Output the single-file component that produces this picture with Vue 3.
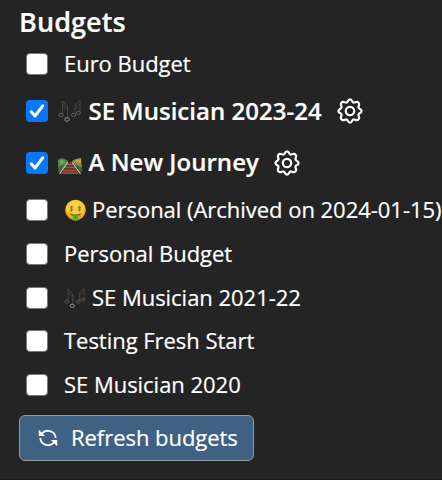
<script setup>
const budgets = [
  { name: 'Euro Budget' },
  { name: 'SE Musician 2023-24', icon: 'notes', active: true },
  { name: 'A New Journey', icon: 'track', active: true },
  { name: 'Personal (Archived on 2024-01-15)', icon: 'money' },
  { name: 'Personal Budget' },
  { name: 'SE Musician 2021-22', icon: 'notes' },
  { name: 'Testing Fresh Start' },
  { name: 'SE Musician 2020' },
]
</script>

<template>
  <main class="panel">
    <h2 class="title">Budgets</h2>
    <ul class="list">
      <li v-for="b in budgets" :key="b.name" class="row" :class="{ active: b.active }">
        <span class="box" role="checkbox" :aria-checked="!!b.active">
          <svg v-if="b.active" viewBox="0 0 22 22"><path d="M5.300 11.800 9 16 16.700 5.800" fill="none" stroke="#fff" stroke-width="3" stroke-linecap="round" stroke-linejoin="round" /></svg>
        </span>
        <svg v-if="b.icon === 'notes'" class="emoji" viewBox="0 0 24 24">
          <g fill="none" stroke="#5c5c5c" stroke-width="1">
            <path d="M4.500 15V2l5 6v7M4.500 6l5 5M9.500 20V8M17 15V6l5-4.500v12M17 9l5-4" stroke="#484848" />
            <ellipse cx="3" cy="16" rx="2.300" ry="1.600" />
            <ellipse cx="9" cy="20.500" rx="2.300" ry="1.800" stroke="#959595" />
            <ellipse cx="15.500" cy="16" rx="2.200" ry="1.600" />
            <ellipse cx="20.500" cy="13.800" rx="2" ry="1.500" />
          </g>
        </svg>
        <svg v-else-if="b.icon === 'track'" class="emoji track" viewBox="0 0 24 24">
          <path d="M0 8l3-2 4 1 3 2-4 8-6 2z" fill="#4b8a3a" />
          <path d="M14 9l4-2 5-1 1 12-4-2z" fill="#918f3a" />
          <path d="M1 9l4-1 2 2-4 4z" fill="#69a653" />
          <path d="M17 8l6-1v4l-4-1z" fill="#bea545" />
          <path d="M0 15l6-3-3 8H0zM18 12l6 4v4h-3z" fill="#3d6630" />
          <path d="M9.500 10h5L22 22H2z" fill="#51332a" />
          <path d="M9 12.500h6M7 15.500h10M5.500 18.500h13M4 21h16" stroke="#9b5b42" stroke-width="1.400" />
          <path d="M10 10 1.500 22M14 10l8.500 12" stroke="#c6bdb5" stroke-width="1.200" />
        </svg>
        <svg v-else-if="b.icon === 'money'" class="emoji" viewBox="0 0 22 22">
          <defs>
            <radialGradient id="face" cx=".5" cy=".35" r=".65">
              <stop offset="0" stop-color="#ffe04b" /><stop offset=".65" stop-color="#fbc52f" /><stop offset="1" stop-color="#e98a1d" />
            </radialGradient>
          </defs>
          <circle cx="11.500" cy="11" r="10.300" fill="url(#face)" />
          <ellipse cx="7.500" cy="9.500" rx="2.800" ry="3.300" fill="#f0c344" />
          <ellipse cx="15.500" cy="9.500" rx="2.800" ry="3.300" fill="#f0c344" />
          <path d="M9 8c-2.500-1-3.500 1-1.500 1.600s1.200 2.600-1.600 1.500M7.500 6.600v6M17 8c-2.500-1-3.500 1-1.500 1.600s1.200 2.600-1.600 1.500M15.500 6.600v6" fill="none" stroke="#8a6a20" stroke-width=".8" />
          <path d="M5.500 14q6 2.600 12 0-1.500 3.800-6 3.800t-6-3.800z" fill="#a3661c" />
          <path d="M8.500 15.500h6v4q0 2.200-3 2.200t-3-2.200z" fill="#55b531" />
          <path d="M11.500 16v3" stroke="#267d20" />
        </svg>
        <span class="name">{{ b.name }}</span>
        <svg v-if="b.active" class="gear" viewBox="0 0 26 26">
          <g fill="none" stroke="#fff" stroke-width="2.200" stroke-linejoin="round">
            <path d="M13 1.400Q14.400 1.400 15.300 3.400Q16.100 5 18 4.300Q20.500 3.300 21.400 4.600Q22.700 5.500 21.700 8Q21 9.900 22.600 10.700Q24.600 11.600 24.600 13Q24.600 14.400 22.600 15.300Q21 16.100 21.700 18Q22.700 20.500 21.400 21.400Q20.500 22.700 18 21.700Q16.100 21 15.300 22.600Q14.400 24.600 13 24.600Q11.600 24.600 10.700 22.600Q9.900 21 8 21.700Q5.500 22.700 4.600 21.400Q3.300 20.500 4.300 18Q5 16.100 3.400 15.300Q1.400 14.400 1.400 13Q1.400 11.600 3.400 10.700Q5 9.900 4.300 8Q3.300 5.500 4.600 4.600Q5.500 3.300 8 4.300Q9.900 5 10.700 3.400Q11.600 1.400 13 1.400Z" />
            <circle cx="13" cy="13" r="4.200" />
          </g>
        </svg>
      </li>
    </ul>
    <button class="refresh">
      <svg viewBox="0 0 20 20">
        <g fill="none" stroke="#fff" stroke-width="1.900">
          <path d="M3.500 6.500A7.700 7.700 0 0 1 17.700 10" />
          <path d="M16.500 13.500A7.700 7.700 0 0 1 2.300 10" />
        </g>
        <path d="M.8 1.800V8H7zM19.200 18.200V12H13z" fill="#fff" />
      </svg>
      <span>Refresh budgets</span>
    </button>
  </main>
</template>

<style>
body { margin: 0; background: #242424; overflow: hidden; }
</style>

<style scoped>
.panel {
  box-sizing: border-box;
  width: 442px;
  height: 480px;
  padding: 2px 0 0 19px;
  background: #242424;
  color: #fff;
  font-family: "Open Sans", "Noto Sans", sans-serif;
  -webkit-text-stroke: 0.2px #fff;
  overflow: hidden;
  border-bottom: 1px solid #1d181c;
}
.title { margin: 0 0 1px; height: 39px; font-size: 27px; line-height: 39px; font-weight: 600; letter-spacing: .1px; }
.list { margin: 0; padding: 0; list-style: none; }
.row { display: flex; align-items: center; height: 43.7px; padding-left: 7px; font-size: 22px; white-space: nowrap; }
.row.active { height: 51.3px; font-size: 24px; font-weight: 600; }
.name { margin-top: -1.600px; letter-spacing: -.03px; }
.active .name { letter-spacing: .03px; }
.box { box-sizing: border-box; flex: none; width: 22px; height: 22px; margin-right: 16px; border: 1px solid #77777a; border-radius: 4px; background: #fff; }
.active .box { margin-right: 10px; border: 0; background: #0878fa; }
.box svg { display: block; width: 22px; height: 22px; }
.emoji { flex: none; width: 22px; height: 22px; margin-right: 6px; }
.active .emoji { width: 24px; height: 24px; margin-right: 6.600px; }
.active .track { margin-top: 3px; }
.gear { flex: none; width: 26px; height: 26px; margin-left: 15.200px; }
.refresh {
  box-sizing: border-box;
  display: flex;
  align-items: center;
  gap: 13px;
  width: 235px;
  height: 46px;
  margin-top: 8.300px;
  padding: 0 0 0 18px;
  border: 1px solid #999;
  border-radius: 6px;
  background: #3f6184;
  color: #fff;
  font: 22px "Open Sans", "Noto Sans", sans-serif;
  -webkit-text-stroke: 0.2px #fff;
  white-space: nowrap;
}
.refresh svg { flex: none; width: 20px; height: 20px; }
.refresh span { margin-top: -2px; letter-spacing: -.04px; }
</style>
